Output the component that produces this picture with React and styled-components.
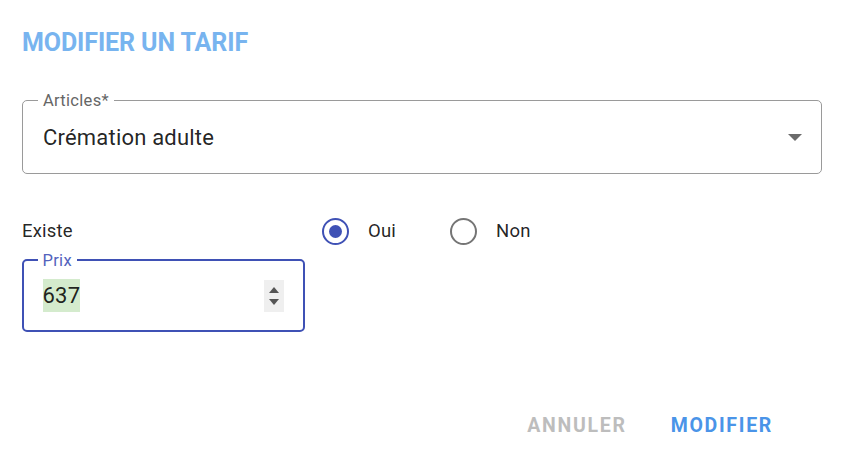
import React from 'react';
import styled, { createGlobalStyle } from 'styled-components';

const GlobalStyle = createGlobalStyle`
	body {
		margin: 0;
		background: #fff;
		font-family: Roboto, "Liberation Sans", sans-serif;
		color: rgba(0, 0, 0, 0.87);
	}
`;

const Dialog = styled.div`
	width: 800px;
	padding: 27px 40px 0 22px;
`;

const Title = styled.h2`
	margin: 0;
	font-size: 25px;
	line-height: 32px;
	font-weight: 700;
	letter-spacing: -0.1px;
	color: #78b4ef;
`;

const Field = styled.div`
	position: relative;
	box-sizing: border-box;
	width: ${({ width }) => width || '100%'};
	height: ${({ height }) => height}px;
	margin-top: ${({ top }) => top}px;
	border: ${({ focused }) => focused ? '2.7px solid #3f51b5' : '1px solid #9a9a9a'};
	border-radius: 5px;
	display: flex;
	align-items: center;
	padding: 0 ${({ focused }) => focused ? 19 : 20}px 0 ${({ focused }) => focused ? 18.5 : 20}px;
`;

const Legend = styled.span`
	position: absolute;
	top: -9px;
	left: ${({ focused }) => focused ? 13.5 : 15}px;
	padding: 0 5px;
	background: #fff;
	font-size: 16.5px;
	line-height: 17px;
	letter-spacing: 0.3px;
	color: ${({ focused }) => focused ? '#5363bd' : '#666'};
`;

const Value = styled.span`
	flex: 1;
	font-size: 22px;
	line-height: 33px;
	letter-spacing: 0.2px;
`;

const Selected = styled.span`
	display: inline-block;
	line-height: 33px;
	background: #d4ebcd;
`;

const Caret = styled.svg`
	width: 14px;
	height: 7px;
	fill: #6b6b6b;
	margin-right: -1px;
`;

const Spinner = styled.div`
	width: 20px;
	height: 32px;
	background: #efefef;
	display: flex;
	flex-direction: column;
	align-items: center;
	justify-content: center;
	gap: 6px;
	svg {
		width: 10px;
		height: 6px;
		fill: #555;
	}
`;

const Row = styled.div`
	display: flex;
	align-items: center;
	height: 40px;
	margin-top: 37px;
`;

const RowLabel = styled.span`
	width: 300px;
	font-size: 18.5px;
	letter-spacing: 0.2px;
`;

const RadioGroup = styled.div`
	display: flex;
	align-items: center;
	gap: 54px;
`;

const RadioItem = styled.label`
	display: flex;
	align-items: center;
	gap: 19px;
	font-size: 18.5px;
	letter-spacing: 0.2px;
`;

const Circle = styled.span`
	box-sizing: border-box;
	width: 27px;
	height: 27px;
	border-radius: 50%;
	border: 2.7px solid ${({ checked }) => checked ? '#3f51b5' : '#757575'};
	display: flex;
	align-items: center;
	justify-content: center;
	&::after {
		content: '';
		width: 13px;
		height: 13px;
		border-radius: 50%;
		background: #3f51b5;
		display: ${({ checked }) => checked ? 'block' : 'none'};
	}
`;

const Actions = styled.div`
	display: flex;
	justify-content: flex-end;
	gap: 44px;
	padding-right: 49px;
	margin-top: 82px;
`;

const Button = styled.button`
	border: 0;
	background: none;
	padding: 0;
	font-family: inherit;
	font-size: 19.5px;
	font-weight: 700;
	letter-spacing: 1.7px;
	line-height: 24px;
	color: ${({ primary }) => primary ? '#4a94e8' : '#bdbdbd'};
`;

function Radio({ checked, label }) {
	return (
		<RadioItem>
			<Circle checked={checked} />
			{label}
		</RadioItem>
	);
}

export default function App() {
	return (
		<Dialog>
			<GlobalStyle />
			<Title>MODIFIER UN TARIF</Title>
			<Field height={74} top={41}>
				<Legend>Articles*</Legend>
				<Value>Crémation adulte</Value>
				<Caret viewBox="0 0 14 7"><path d="M0 0h14L7 7z" /></Caret>
			</Field>
			<Row>
				<RowLabel>Existe</RowLabel>
				<RadioGroup>
					<Radio checked label="Oui" />
					<Radio label="Non" />
				</RadioGroup>
			</Row>
			<Field focused width="283px" height={73} top={8}>
				<Legend focused>Prix</Legend>
				<Value><Selected>637</Selected></Value>
				<Spinner>
					<svg viewBox="0 0 10 6"><path d="M5 0l5 6H0z" /></svg>
					<svg viewBox="0 0 10 6"><path d="M0 0h10L5 6z" /></svg>
				</Spinner>
			</Field>
			<Actions>
				<Button>ANNULER</Button>
				<Button primary>MODIFIER</Button>
			</Actions>
		</Dialog>
	);
}
